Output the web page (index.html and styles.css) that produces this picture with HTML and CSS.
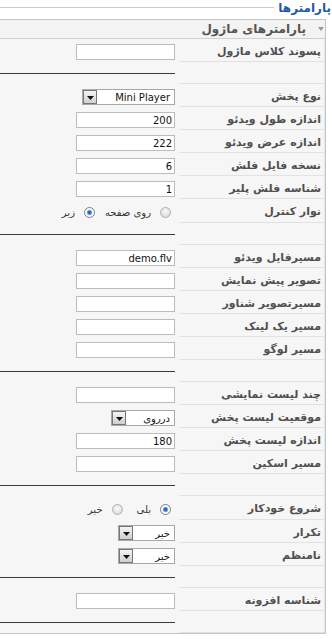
FILE: index.html
```html
<!DOCTYPE html>
<html lang="fa">
<head>
  <meta charset="UTF-8" />
  <meta name="viewport" content="width=device-width, initial-scale=1.0"/>
  <title>پارامترها</title>
  <link rel="stylesheet" href="styles.css">
</head>
<body>
  <div class="page">
    <div class="legend-row">
      <span class="legend">پارامترها</span>
      <span class="legend-line"></span>
    </div>

    <div class="panel">
      <div class="panel-head">
        <svg class="toggle" width="6" height="4" viewBox="0 0 6 4"><path d="M0 0h6L3 4z" fill="#a0959a"/></svg>
        <span>پارامترهای ماژول</span>
      </div>

      <div class="params">
        <div class="row">
          <div class="key">پسوند کلاس ماژول</div>
          <div class="val"><input class="text" type="text" value=""></div>
        </div>
        <div class="row spacer">
          <div class="key"></div>
          <div class="val"><hr></div>
        </div>
        <div class="row">
          <div class="key">نوع پخش</div>
          <div class="val">
            <div class="select w-lg">
              <span class="sel-text">Mini Player</span>
              <span class="sel-btn"><svg width="7" height="4" viewBox="0 0 7 4"><path d="M0 0h7L3.5 4z" fill="#111"/></svg></span>
            </div>
          </div>
        </div>
        <div class="row">
          <div class="key">اندازه طول ویدئو</div>
          <div class="val"><input class="text" type="text" value="200"></div>
        </div>
        <div class="row">
          <div class="key">اندازه عرض ویدئو</div>
          <div class="val"><input class="text" type="text" value="222"></div>
        </div>
        <div class="row">
          <div class="key">نسخه فایل فلش</div>
          <div class="val"><input class="text" type="text" value="6"></div>
        </div>
        <div class="row">
          <div class="key">شناسه فلش پلیر</div>
          <div class="val"><input class="text" type="text" value="1"></div>
        </div>
        <div class="row radios">
          <div class="key">نوار کنترل</div>
          <div class="val">
            <label class="opt"><input type="radio" name="controlbar">روی صفحه</label>
            <label class="opt far"><input type="radio" name="controlbar" checked>زیر</label>
          </div>
        </div>
        <div class="row spacer">
          <div class="key"></div>
          <div class="val"><hr></div>
        </div>
        <div class="row">
          <div class="key">مسیرفایل ویدئو</div>
          <div class="val"><input class="text" type="text" value="demo.flv"></div>
        </div>
        <div class="row">
          <div class="key">تصویر پیش نمایش</div>
          <div class="val"><input class="text" type="text" value=""></div>
        </div>
        <div class="row">
          <div class="key">مسیرتصویر شناور</div>
          <div class="val"><input class="text" type="text" value=""></div>
        </div>
        <div class="row">
          <div class="key">مسیر یک لینک</div>
          <div class="val"><input class="text" type="text" value=""></div>
        </div>
        <div class="row">
          <div class="key">مسیر لوگو</div>
          <div class="val"><input class="text" type="text" value=""></div>
        </div>
        <div class="row spacer">
          <div class="key"></div>
          <div class="val"><hr></div>
        </div>
        <div class="row">
          <div class="key">چند لیست نمایشی</div>
          <div class="val"><input class="text" type="text" value=""></div>
        </div>
        <div class="row">
          <div class="key">موقعیت لیست پخش</div>
          <div class="val">
            <div class="select w-md">
              <span class="sel-text">درروی</span>
              <span class="sel-btn"><svg width="7" height="4" viewBox="0 0 7 4"><path d="M0 0h7L3.5 4z" fill="#111"/></svg></span>
            </div>
          </div>
        </div>
        <div class="row">
          <div class="key">اندازه لیست پخش</div>
          <div class="val"><input class="text" type="text" value="180"></div>
        </div>
        <div class="row">
          <div class="key">مسیر اسکین</div>
          <div class="val"><input class="text" type="text" value=""></div>
        </div>
        <div class="row spacer">
          <div class="key"></div>
          <div class="val"><hr></div>
        </div>
        <div class="row radios">
          <div class="key">شروع خودکار</div>
          <div class="val">
            <label class="opt"><input type="radio" name="autostart" checked>بلی</label>
            <label class="opt"><input type="radio" name="autostart">خیر</label>
          </div>
        </div>
        <div class="row">
          <div class="key">تکرار</div>
          <div class="val">
            <div class="select w-sm">
              <span class="sel-text">خیر</span>
              <span class="sel-btn"><svg width="7" height="4" viewBox="0 0 7 4"><path d="M0 0h7L3.5 4z" fill="#111"/></svg></span>
            </div>
          </div>
        </div>
        <div class="row">
          <div class="key">نامنظم</div>
          <div class="val">
            <div class="select w-sm">
              <span class="sel-text">خیر</span>
              <span class="sel-btn"><svg width="7" height="4" viewBox="0 0 7 4"><path d="M0 0h7L3.5 4z" fill="#111"/></svg></span>
            </div>
          </div>
        </div>
        <div class="row spacer">
          <div class="key"></div>
          <div class="val"><hr></div>
        </div>
        <div class="row">
          <div class="key">شناسه افزونه</div>
          <div class="val"><input class="text" type="text" value=""></div>
        </div>
        <div class="row spacer">
          <div class="key"></div>
          <div class="val"><hr></div>
        </div>
      </div>
    </div>
  </div>
</body>
</html>
```

FILE: styles.css
```css
* {
  box-sizing: border-box;
}

body {
  margin: 0;
  background: #fff;
  font-family: "DejaVu Sans", sans-serif;
  font-size: 11px;
  color: #333;
  overflow: hidden;
}

.page {
  direction: rtl;
  width: 332px;
}

/* fieldset legend */
.legend-row {
  display: flex;
  align-items: center;
  height: 15px;
  margin-bottom: 4px;
}

.legend {
  color: #2559a6;
  font-weight: bold;
  font-size: 12px;
  white-space: nowrap;
  padding: 0 1px 0 4px;
}

.legend-line {
  flex: 1;
  border-top: 1px solid #cacaca;
}

/* slider panel */
.panel {
  margin-right: 6px;
  border: 1px solid #c4c4c4;
  border-left: none;
  background: #f6f6f6;
}

.panel-head {
  display: flex;
  align-items: center;
  gap: 12px;
  height: 19px;
  padding-right: 1px;
  border-bottom: 1px solid #d0d0d0;
  background: #f3f3f3;
  color: #555;
  font-weight: bold;
  font-size: 12px;
}

.toggle {
  flex-shrink: 0;
}

/* param rows */
.row {
  display: grid;
  grid-template-columns: 146px 1fr;
}

.key {
  padding: 5px 3px 0 4px;
  line-height: 16px;
  border-bottom: 1px solid #e2e2e2;
  border-right: 1px solid #e8e8e8;
  color: #505050;
  font-weight: bold;
  white-space: nowrap;
}

.val {
  padding: 5px 4px 2px 0;
  display: flex;
}

.row.spacer .val {
  height: 22px;
  padding: 11px 4px 0 0;
  display: block;
}

.row.spacer hr {
  margin: 0;
  border: none;
  border-top: 1px solid #3a3a3a;
}

.row.radios .val {
  height: 24px;
  padding: 2px 8px 0 0;
  align-items: center;
}

/* inputs */
input.text {
  width: 99px;
  height: 16px;
  margin: 0;
  padding: 0 2px;
  border: 1px solid #bcbcbc;
  background: #fff;
  font-family: "DejaVu Sans", sans-serif;
  font-size: 10px;
  color: #111;
  direction: rtl;
}

.select {
  display: flex;
  align-items: center;
  height: 16px;
  border: 1px solid #a8a8a8;
  background: #fff;
  font-size: 10px;
  color: #111;
}

.select.w-lg { width: 93px; }
.select.w-md { width: 64px; }
.select.w-sm { width: 57px; }

.sel-text {
  flex: 1;
  padding-right: 4px;
  white-space: nowrap;
}

.sel-btn {
  width: 14px;
  height: 14px;
  border: 1px solid #777;
  background: linear-gradient(#f4f4f4, #cfcfcf);
  display: flex;
  justify-content: center;
  align-items: flex-end;
  padding-bottom: 3px;
}

.sel-btn svg {
  display: block;
}

/* radios */
.opt {
  display: flex;
  align-items: center;
  gap: 9px;
  color: #333;
  font-size: 10px;
}

.opt + .opt {
  margin-right: 14px;
}

.opt.far {
  margin-right: 10px;
}

.opt input {
  appearance: none;
  width: 11px;
  height: 11px;
  margin: 0;
  border-radius: 50%;
  border: 1px solid #b0b0b0;
  background: radial-gradient(circle at 50% 40%, #fbfbfb, #d2d2d2);
}

.opt input:checked {
  border-color: #6f8097;
  background: radial-gradient(circle, #1d4f9c 0, #3f7acb 1.6px, #a7c0e2 2.6px, #fff 3.2px, #eef1f4 100%);
}
```
